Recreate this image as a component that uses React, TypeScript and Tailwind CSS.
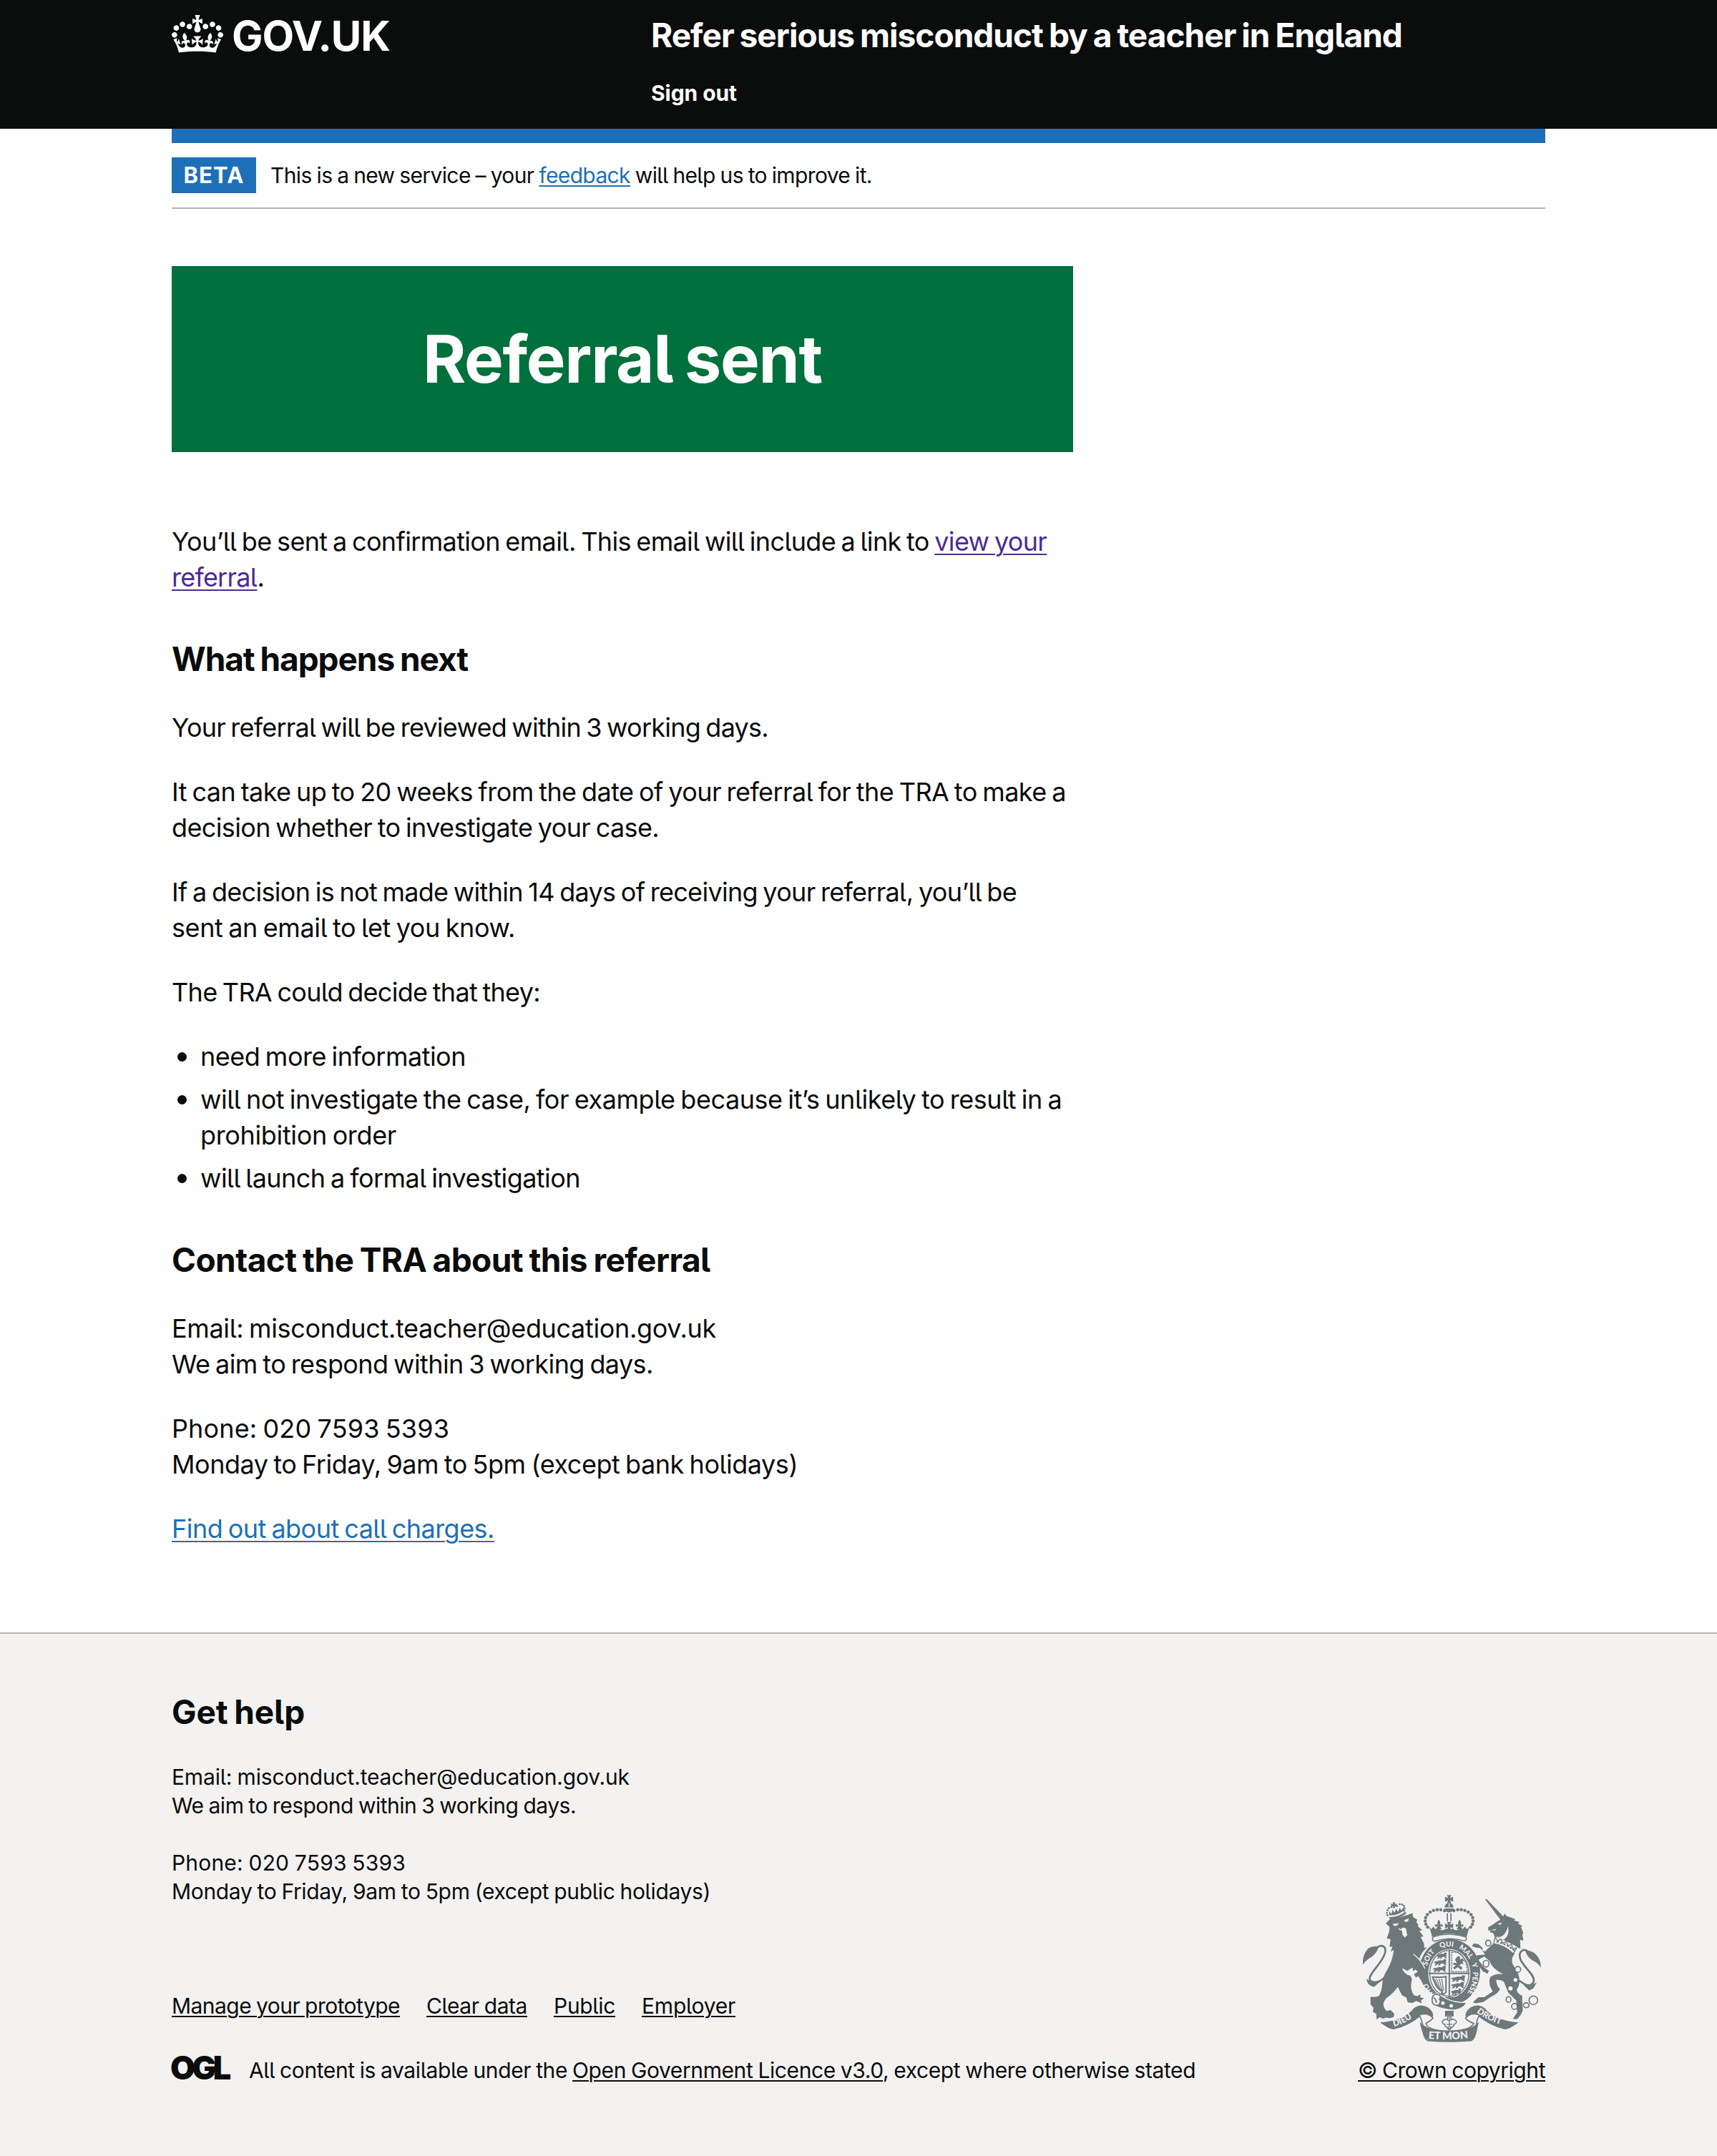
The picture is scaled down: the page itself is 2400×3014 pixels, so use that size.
import type { ReactNode } from "react";

/* One line of text with its own tracking. */
function Line({ track, children }: { track: string; children: ReactNode }) {
  return <span className={"block whitespace-nowrap " + track}>{children}</span>;
}

function Crown() {
  return (
    <svg viewBox="0 0 132 97" className="block h-[53px] w-[72px]" fill="currentColor" aria-hidden="true">
      <path fillRule="evenodd" d="M25 30.2c3.5 1.5 7.7-.2 9.1-3.7 1.5-3.6-.2-7.8-3.9-9.2-3.6-1.4-7.6.3-9.1 3.9-1.4 3.5.3 7.5 3.9 9zM9 39.5c3.6 1.5 7.8-.2 9.2-3.7 1.5-3.6-.2-7.8-3.9-9.1-3.6-1.5-7.6.2-9.1 3.8-1.4 3.5.3 7.5 3.8 9zM4.4 57.2c3.5 1.5 7.7-.2 9.1-3.8 1.5-3.6-.2-7.7-3.9-9.1-3.5-1.5-7.6.3-9.1 3.8-1.4 3.5.3 7.6 3.9 9.1zm38.3-21.4c3.5 1.5 7.7-.2 9.1-3.8 1.5-3.6-.2-7.7-3.9-9.1-3.6-1.5-7.6.3-9.1 3.8-1.3 3.6.4 7.7 3.9 9.1zm64.4-5.6c-3.6 1.5-7.8-.2-9.1-3.7-1.5-3.6.2-7.8 3.8-9.2 3.6-1.4 7.7.3 9.2 3.9 1.3 3.5-.4 7.5-3.9 9zm15.9 9.3c-3.6 1.5-7.7-.2-9.1-3.7-1.5-3.6.2-7.8 3.7-9.1 3.6-1.5 7.7.2 9.2 3.8 1.5 3.5-.3 7.5-3.8 9zm4.7 17.7c-3.6 1.5-7.8-.2-9.2-3.8-1.5-3.6.2-7.7 3.9-9.1 3.6-1.5 7.7.3 9.2 3.8 1.3 3.5-.4 7.6-3.9 9.1zM89.3 35.8c-3.6 1.5-7.8-.2-9.2-3.8-1.4-3.6.2-7.7 3.9-9.1 3.6-1.5 7.7.3 9.2 3.8 1.4 3.6-.3 7.7-3.9 9.1zM69.7 17.7l8.9 4.7V9.3l-8.9 2.8c-.2-.3-.5-.6-.9-.9L72.4 0H59.6l3.5 11.2c-.3.3-.6.5-.9.9l-8.8-2.8v13.1l8.8-4.7c.3.3.6.7.9.9l-5 15.4v.1c-.2.8-.4 1.6-.4 2.4 0 4.1 3.1 7.5 7 8.1h.2c.3 0 .7.1 1 .1.4 0 .7 0 1-.1h.2c4-.6 7.1-4.1 7.1-8.1 0-.8-.1-1.7-.4-2.4V34l-5.1-15.4c.4-.2.7-.6 1-.9zM66 92.8c16.9 0 32.8 1.1 47.1 3.2 4-16.9 8.9-26.7 14-33.5l-9.6-3.4c1 4.9 1.1 7.2 0 10.2-1.5-1.4-3-4.3-4.2-8.7L108.6 76c2.8-2 5-3.2 7.5-3.3-4.4 9.4-10 11.9-13.6 11.2-4.3-.8-6.3-4.6-5.6-7.9 1-4.7 5.7-5.9 8-.5 4.3-8.7-3-11.4-7.6-8.8 7.1-7.2 7.9-13.5 2.1-21.1-8 6.1-8.1 12.3-4.5 20.8-4.7-5.4-12.1-2.5-9.5 6.2 3.4-5.2 7.9-2 7.2 3.1-.6 4.3-6.4 7.8-13.5 7.2-10.3-.9-10.9-8-11.2-13.8 2.5-.5 7.1 1.8 11 7.3L80.2 60c-4.1 4.4-8 5.3-12.3 5.4 1.4-4.4 8-11.6 8-11.6H55.5s6.4 7.2 7.9 11.6c-4.2-.1-8-1-12.3-5.4l1.4 16.4c3.9-5.5 8.5-7.7 10.9-7.3-.3 5.8-.9 12.8-11.1 13.8-7.2.6-12.9-2.9-13.5-7.2-.7-5 3.8-8.3 7.1-3.1 2.7-8.7-4.6-11.6-9.4-6.2 3.7-8.5 3.6-14.7-4.6-20.8-5.8 7.6-5 13.9 2.2 21.1-4.7-2.6-11.9.1-7.7 8.8 2.3-5.5 7.1-4.2 8.1.5.7 3.3-1.3 7.1-5.7 7.9-3.5.7-9-1.8-13.5-11.2 2.5.1 4.7 1.3 7.5 3.3l-4.7-15.4c-1.2 4.4-2.7 7.2-4.3 8.7-1.1-3-.9-5.3 0-10.2l-9.5 3.4c5 6.9 9.9 16.7 14 33.5 14.8-2.1 30.8-3.2 47.7-3.2z" />
    </svg>
  );
}

const archBeads = [[418, 124], [402, 120], [387, 120], [372, 123], [358, 130], [346, 140], [339, 153], [337, 167], [340, 181], [347, 193]];
const lionBeads = [[179, 143], [177, 133], [179, 122], [185, 113], [195, 109], [219, 105], [230, 97], [240, 98], [248, 104], [251, 114], [249, 124]];
const crossPattee = "M-9-17H9L4-5 17-10V10L4 5 9 17H-9L-4 5-17 10V-10L-4-5Z";
const fleur = "M0-22q9 10 5 22 8-8 12 2-1 7-8 6 2-5-3-4 0 8 8 14H-14q8-6 8-14-5-1-3 4-7 1-8-6 4-10 12-2-4-12 5-22Z";
const passant = "M0 8q4-8 12-6 8-6 18-3l6-7 8 3-3 8q4 5-2 8l5 7h-6l-6-7-8 1-2 7h-6l1-8-8 8H3l5-9Z";

function RoyalArms() {
  return (
    <svg viewBox="70 55 755 620" className="block h-[207px] w-[252px]" fill="#6d787b" stroke="none" aria-hidden="true">
      {/* imperial crown */}
      <path d={crossPattee} transform="translate(437 76)" />
      <path d="M418 110q2-18 19-18t19 18Z" />
      <path d="M437 94v14" stroke="#f3f2f1" strokeWidth="4" />
      <path d="M417 115h40q-4 16-20 16t-20-16Z" />
      {archBeads.map(([x, y]) => (
        <g key={x}>
          <circle cx={x} cy={y} r="6.8" />
          <circle cx={875 - x} cy={y} r="6.8" />
        </g>
      ))}
      <path d="M430 134v34M445 134v34" stroke="#6d787b" strokeWidth="5" />
      <path d={crossPattee} transform="translate(437 188)" />
      <path d={fleur} transform="translate(394 184)" />
      <path d={fleur} transform="translate(481 184)" />
      <path d="M352 188 362 202 372 190Q378 208 394 200 408 212 424 199 437 208 452 199 466 212 481 200 496 208 503 190L512 202 524 188Q516 212 510 234 437 206 366 234 362 212 352 188Z" />
      <path d="M372 233Q437 213 504 233 512 237 509 245 506 252 498 250 437 232 376 252 366 250 368 238Z" fill="none" stroke="#6d787b" strokeWidth="4.5" />

      {/* garter and quartered shield */}
      <path fillRule="evenodd" d="M440 243c72 0 127 60 127 134 0 66-40 122-88 134-92-12-166-58-166-134 0-74 55-134 127-134Zm0 42c-50 0-90 44-90 102s40 102 88 102 88-44 88-102-38-102-86-102Z" />
      <path d="M438 290c-46 0-82 42-82 97s36 96 82 96 82-42 82-96-36-97-82-97Z" fill="none" stroke="#6d787b" strokeWidth="4" />
      <path d="M438 288v206M352 387h172" stroke="#6d787b" strokeWidth="6" />
      <path d="M416 486h44l-8 10h-28Z" />
      <path d={passant} transform="translate(384 306)" />
      <path d={passant} transform="translate(372 334) scale(1.25 1)" />
      <path d={passant} transform="translate(368 362) scale(1.3 1)" />
      <path d={passant} transform="translate(444 402) scale(1.4 1)" />
      <path d={passant} transform="translate(444 430) scale(1.3 1)" />
      <path d={passant} transform="translate(444 458) scale(1 1)" />
      <path d="M448 298h28q34 22 38 82h-66Z" fill="none" stroke="#6d787b" strokeWidth="4" strokeDasharray="8 3" />
      <path d="M470 318q10-8 14 2l-2 8 12-4 10 14-12-4 6 14-10-2-8 6 14 12-8 8-12-12-14 10-6-8 12-10-12-2 2-8 14 2-8-14Z" />
      <path d="M368 402q30 2 56-2v66q-10 12-20 6 8-6 4-12-24-8-40-58Z" fill="none" stroke="#6d787b" strokeWidth="6" />
      <path d="M384 408l20 54M395 408l14 52M406 408l8 50M376 410l22 48" stroke="#6d787b" strokeWidth="3.5" />
      <path d="M366 478Q384 466 400 478 450 512 512 508L500 524Q470 546 430 538 392 532 366 516 358 496 366 478Z" stroke="#f3f2f1" strokeWidth="4" />
      <path d="M384 474c14 0 22 12 12 20 8 6 4 26-10 26-12 0-20-8-20-20 0-14 6-26 18-26Z" fill="#f3f2f1" stroke="#6d787b" strokeWidth="5" />
      <path d="M372 488q12 6 12 22" fill="none" stroke="#6d787b" strokeWidth="5" />
      <circle cx="411" cy="511" r="7.5" fill="#f3f2f1" />
      <circle cx="446" cy="522" r="7.5" fill="#f3f2f1" />
      <defs>
        <path id="garterHoni" d="M370 468Q346 442 340 400" />
        <path id="garterSoit" d="M345 356Q358 304 402 281" />
        <path id="garterQui" d="M400 280Q436 268 474 280" />
        <path id="garterMal" d="M477 282Q512 302 530 342" />
        <path id="garterY" d="M531 346L539 372" />
        <path id="garterPense" d="M537 381Q540 442 492 500" />
        <path id="ribbonLeft" d="M206 609Q264 594 314 548" />
        <path id="ribbonRight" d="M552 550Q606 592 690 610" />
        <path id="ribbonMid" d="M350 660Q438 668 530 656" />
      </defs>

      {/* pendant badge */}
      <path d="M420 543h36v24h-8q-10-14-20 0h-8Z" />
      <path d="M438 560q12 12 6 22 14-8 24 6-2 12-12 12 4 8-6 10l-6 8h-12l-6-8q-10-2-6-10-10 0-12-12 10-14 24-6-6-10 6-22Z" fill="none" stroke="#6d787b" strokeWidth="4.5" />
      <path d="M438 566v40M426 600h24" stroke="#6d787b" strokeWidth="4" />
      <circle cx="438" cy="616" r="6" fill="none" stroke="#6d787b" strokeWidth="4" />

      {/* motto ribbon */}
      <path d="M148 592Q250 584 290 532 318 510 350 530 372 548 370 566 350 590 320 564 262 610 205 621 188 622 148 592Z" />
      <path d="M728 592Q626 584 586 532 558 510 526 530 504 548 506 566 526 590 556 564 614 610 671 621 688 622 728 592Z" />
      <path d="M312 560Q350 548 370 574 360 586 340 596 346 626 436 628 528 626 540 596 514 586 506 574 524 548 564 560 548 590 552 620 546 660 530 668 440 676 346 668 326 650 328 616 326 586 312 560Z" fill="#f3f2f1" stroke="#6d787b" strokeWidth="5" />
      <path d="M314 590Q350 630 436 628 526 630 562 590 548 650 538 664 500 672 436 672 376 672 346 664 326 650 314 590Z" />
      <g fill="#f3f2f1" className="font-['Lato'] font-black">
        <text fontSize="36"><textPath href="#ribbonLeft">DIEU</textPath></text>
        <text fontSize="36"><textPath href="#ribbonRight">DROIT</textPath></text>
        <text fontSize="43"><textPath href="#ribbonMid">ET MON</textPath></text>
      </g>

      {/* lion */}
      <path d="M76 350Q72 312 98 282 118 270 142 274 136 300 112 318 92 328 76 350Z" />
      <path d="M130 284C150 262 176 270 169 300 160 340 112 376 105 404 100 428 140 434 172 398" fill="none" stroke="#6d787b" strokeWidth="8" />
      <path d="M90 410Q104 414 114 426L150 420 122 444 108 438 98 430Z" />
      <path d="M190 158Q236 152 284 134L286 150 304 162 300 172 308 182 306 190 326 206 312 208 330 232 318 234 332 262 333 280 346 276 324 300 312 324 334 366 346 384 344 408 334 402 330 416 316 412 308 398 298 404 290 390 306 380 296 370 286 378 284 362 262 376 240 364Q248 390 274 396 284 406 280 420 272 452 290 478L304 482 318 474 316 488 332 490 320 500 322 512 300 502 284 510 264 508 258 488 240 478 222 444Q210 462 186 482 168 492 162 512 162 534 176 544L192 540 208 556 204 570 188 574 172 572 160 576 146 570 134 580 132 556 118 548 120 530 108 516 108 484Q124 488 142 482 150 474 156 444 158 400 178 372 200 334 206 288L192 296 200 274 188 276 192 244 176 240 186 212 188 192 172 178Z" />
      <path d="M288 306Q318 330 336 366" fill="none" stroke="#f3f2f1" strokeWidth="4" />
      <path d="M200 180 226 176 220 186 208 188ZM248 164 268 156 266 168 254 172ZM224 196 234 202 244 194 256 198 262 226 252 236 242 226 240 208 228 204Z" fill="#f3f2f1" />
      <path d="M184 150Q218 154 254 128L258 136Q222 162 188 158Z" />
      <path d="M186 143Q218 146 250 122L246 108 238 124 230 112 224 130 216 116 208 132 200 120 196 138 186 126Z" />
      <path d={crossPattee} transform="translate(206 101) scale(.68)" />
      {lionBeads.map(([x, y]) => (
        <circle key={x + "-" + y} cx={x} cy={y} r="4.2" />
      ))}

      {/* unicorn */}
      <path d="M587 75 595 76 664 148 670 136 678 146 716 160 708 164 732 172 726 178 744 188 738 194 748 216 744 224 748 250 734 246 736 284 722 276Q700 262 640 236L628 234 622 218 608 214 610 206 602 208 600 194 620 182 640 168 652 162Z" />
      <path d="M640 178 658 174 652 184ZM612 206 634 200 630 206Z" fill="#f3f2f1" />
      <path d="M634 232Q668 244 684 190 692 230 664 246Z" fill="#f3f2f1" />
      <path d="M622 262Q668 268 712 304 694 324 704 350 722 372 730 400 736 430 722 452 716 466 744 482 742 500 746 540 740 560 722 578H704L722 550 718 500 684 466 670 430Q668 414 634 414 636 440 650 452 646 470 610 486L582 506 552 512 536 508 560 486 584 486 620 462Q598 430 610 402 630 386 664 390 616 366 606 334L584 316 560 330 584 362 604 376 598 388 578 378 556 346 544 320 556 310 588 308 568 280 548 278 532 272 540 262 560 264 590 292Z" />
      <path d="M630 236 640 250 654 244 662 260 676 254 686 272 698 264 704 284 720 280 706 304Q668 268 624 262Z" fill="#f3f2f1" stroke="#6d787b" strokeWidth="4" />
      <path d="M636 254Q680 264 712 292" fill="none" stroke="#6d787b" strokeWidth="7" strokeDasharray="9 6" />
      <path d="M821 362Q824 330 798 304 782 290 756 290 762 316 786 332 808 340 821 362Z" />
      <path d="M768 296C750 280 728 292 734 322 742 356 796 390 792 418 786 442 764 444 730 416" fill="none" stroke="#6d787b" strokeWidth="8" />
      <path d="M804 424Q792 430 780 440L748 434 772 458 790 450Z" />
      <g fill="none" stroke="#6d787b" strokeWidth="5">
        <ellipse cx="601" cy="260" rx="11" ry="12" />
        <ellipse cx="592" cy="346" rx="12" ry="14" fill="#f3f2f1" />
        <circle cx="725" cy="370" r="12" fill="#f3f2f1" />
        <ellipse cx="686" cy="496" rx="10" ry="12" />
        <circle cx="711" cy="525" r="12" />
        <ellipse cx="760" cy="520" rx="12" ry="10" />
        <circle cx="790" cy="499" r="18" />
      </g>
      <g fill="#f3f2f1">
        <circle cx="584" cy="286" r="8" />
        <circle cx="715" cy="414" r="8" />
        <circle cx="694" cy="450" r="9" />
      </g>

      {/* garter motto */}
      <g fill="#f3f2f1" className="font-['Lato'] text-[30px] font-black">
        <text><textPath href="#garterHoni">HO</textPath></text>
        <text><textPath href="#garterSoit">SOIT</textPath></text>
        <text><textPath href="#garterQui">QUI</textPath></text>
        <text><textPath href="#garterMal">MAL</textPath></text>
        <text><textPath href="#garterY">Y</textPath></text>
        <text><textPath href="#garterPense">PENSE</textPath></text>
      </g>
    </svg>
  );
}

function Bullet() {
  return <span className="mt-[19px] mr-[19px] ml-[8px] size-[13px] shrink-0 rounded-full bg-[#0b0c0c]" />;
}

const link = "underline decoration-2 underline-offset-[4px]";
const smallLink = "underline decoration-2 underline-offset-[3px]";
const body = "text-[36px] leading-[50px] [word-spacing:-2px]";
const small = "text-[30px] leading-[40px] [word-spacing:-1px]";
const heading = "text-[46px] leading-[60px] font-bold [word-spacing:-2px]";

export default function App() {
  return (
    <div className="min-h-[3014px] w-[2400px] bg-white font-['Inter',sans-serif] text-[#0b0c0c] [font-feature-settings:'cv05']">
      <header className="h-[180px] bg-[#0b0c0c] text-white">
        <div className="mx-auto flex w-[1920px]">
          <a className="flex w-[670px] items-start pt-[21px]">
            <Crown />
            <span className="-mt-px ml-[12px] text-[58px] leading-[60px] font-bold"><Line track="tracking-[-1.03px]">GOV.UK</Line></span>
          </a>
          <div className="pt-[19px]">
            <div className={heading}><Line track="tracking-[-0.97px]">Refer serious misconduct by a teacher in England</Line></div>
            <div className="mt-[31px] text-[30px] leading-[40px] font-bold"><Line track="tracking-[-0.07px]">Sign out</Line></div>
          </div>
        </div>
      </header>

      <div className="mx-auto w-[1920px]">
        <div className="h-5 bg-[#1d70b8]" />
        <div className="flex h-[92px] items-center border-b-2 border-[#b1b4b6]">
          <strong className="flex h-[50px] w-[118px] items-center justify-center bg-[#1d70b8] text-[31px] font-bold text-white">
            <Line track="tracking-[1.2px]">BETA</Line>
          </strong>
          <span className={"ml-5 " + small}>
            <Line track="tracking-[-0.63px]">This is a new service – your <a className={"text-[#1d70b8] " + smallLink}>feedback</a> will help us to improve it.</Line>
          </span>
        </div>

        <main className="w-[1260px] pt-20">
          <div className="flex h-[260px] items-center justify-center bg-[#00703c]">
            <h1 className="text-[92px] leading-[100px] font-bold text-white [word-spacing:-4px]"><Line track="tracking-[-1.3px]">Referral sent</Line></h1>
          </div>
          <p className={"mt-[100px] " + body}>
            <Line track="tracking-[-0.65px]">You’ll be sent a confirmation email. This email will include a link to <a className={"text-[#4c2c92] " + link}>view your</a></Line>
            <Line track="tracking-[-0.77px]"><a className={"text-[#4c2c92] " + link}>referral</a>.</Line>
          </p>
          <h2 className={"mt-[59px] " + heading}><Line track="tracking-[-1.07px]">What happens next</Line></h2>
          <p className={"mt-[41px] " + body}><Line track="tracking-[-0.77px]">Your referral will be reviewed within 3 working days.</Line></p>
          <p className={"mt-10 " + body}>
            <Line track="tracking-[-0.57px]">It can take up to 20 weeks from the date of your referral for the TRA to make a</Line>
            <Line track="tracking-[-0.63px]">decision whether to investigate your case.</Line>
          </p>
          <p className={"mt-10 " + body}>
            <Line track="tracking-[-0.7px]">If a decision is not made within 14 days of receiving your referral, you’ll be</Line>
            <Line track="tracking-[-0.38px]">sent an email to let you know.</Line>
          </p>
          <p className={"mt-10 " + body}><Line track="tracking-[-0.7px]">The TRA could decide that they:</Line></p>
          <ul className={"mt-10 flex flex-col gap-[10px] " + body}>
            <li className="flex"><Bullet /><Line track="tracking-[-0.51px]">need more information</Line></li>
            <li className="flex">
              <Bullet />
              <span>
                <Line track="tracking-[-0.45px]">will not investigate the case, for example because it’s unlikely to result in a</Line>
                <Line track="tracking-[-0.35px]">prohibition order</Line>
              </span>
            </li>
            <li className="flex"><Bullet /><Line track="tracking-[-0.56px]">will launch a formal investigation</Line></li>
          </ul>
          <h2 className={"mt-[59px] " + heading}><Line track="tracking-[-0.56px]">Contact the TRA about this referral</Line></h2>
          <p className={"mt-[41px] " + body}>
            <Line track="tracking-[-0.35px]">Email: misconduct.teacher@education.gov.uk</Line>
            <Line track="tracking-[-0.58px]">We aim to respond within 3 working days.</Line>
          </p>
          <p className={"mt-10 " + body}>
            <Line track="tracking-[0.13px]">Phone: 020 7593 5393</Line>
            <Line track="tracking-[-0.45px]">Monday to Friday, 9am to 5pm (except bank holidays)</Line>
          </p>
          <p className={"mt-10 " + body}>
            <Line track="tracking-[-0.53px]"><a className={"text-[#1d70b8] " + link}>Find out about call charges.</a></Line>
          </p>
        </main>
      </div>

      <footer className="mt-[120px] h-[732px] border-t-2 border-[#b1b4b6] bg-[#f3f2f1] pt-[79px]">
        <div className="mx-auto w-[1920px]">
          <h2 className={heading}><Line track="tracking-[-0.11px]">Get help</Line></h2>
          <div className="flex items-end justify-between">
            <div className={small}>
              <p className="mt-[41px]">
                <Line track="tracking-[-0.17px]">Email: misconduct.teacher@education.gov.uk</Line>
                <Line track="tracking-[-0.49px]">We aim to respond within 3 working days.</Line>
              </p>
              <p className="mt-10">
                <Line track="tracking-[0.19px]">Phone: 020 7593 5393</Line>
                <Line track="tracking-[-0.34px]">Monday to Friday, 9am to 5pm (except public holidays)</Line>
              </p>
              <nav className="mt-[120px] flex gap-[37px]">
                <a className={"whitespace-nowrap tracking-[-0.54px] " + smallLink}>Manage your prototype</a>
                <a className={"whitespace-nowrap tracking-[-0.41px] " + smallLink}>Clear data</a>
                <a className={"whitespace-nowrap tracking-[-0.32px] " + smallLink}>Public</a>
                <a className={"whitespace-nowrap tracking-[-0.25px] " + smallLink}>Employer</a>
              </nav>
              <div className="mt-[50px] flex">
                <span className="-ml-[2px] w-[110px] text-[45px] leading-[33px] font-black tracking-[-4.6px]">OGL</span>
                <Line track="tracking-[-0.4px]">All content is available under the <a className={smallLink}>Open Government Licence v3.0</a>, except where otherwise stated</Line>
              </div>
            </div>
            <a className={"flex flex-col items-center " + small}>
              <RoyalArms />
              <span className={"mt-[19px] whitespace-nowrap tracking-[-0.44px] " + smallLink}>© Crown copyright</span>
            </a>
          </div>
        </div>
      </footer>
    </div>
  );
}
